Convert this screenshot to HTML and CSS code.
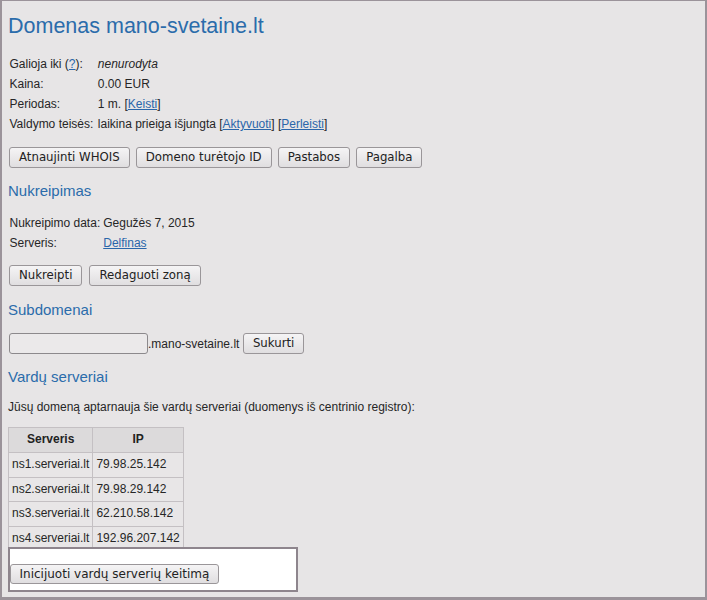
FILE: index.html
```html
<!DOCTYPE html>
<html lang="lt">
<head>
<meta charset="utf-8">
<title>Domenas mano-svetaine.lt</title>
<link rel="stylesheet" href="styles.css">
</head>
<body>
<div class="frame">
  <h1 class="title">Domenas mano-svetaine.lt</h1>

  <table class="info info-top">
    <tr><td>Galioja iki (<a href="#">?</a>):</td><td><em>nenurodyta</em></td></tr>
    <tr><td>Kaina:</td><td>0.00 EUR</td></tr>
    <tr><td>Periodas:</td><td>1 m. [<a href="#">Keisti</a>]</td></tr>
    <tr><td>Valdymo teisės:</td><td>laikina prieiga išjungta [<a href="#">Aktyvuoti</a>] [<a href="#">Perleisti</a>]</td></tr>
  </table>

  <div class="btns btns-1">
    <button class="btn">Atnaujinti WHOIS</button>
    <button class="btn">Domeno turėtojo ID</button>
    <button class="btn">Pastabos</button>
    <button class="btn">Pagalba</button>
  </div>

  <h2 class="section s-redirect">Nukreipimas</h2>

  <table class="info info-redirect">
    <tr><td>Nukreipimo data:</td><td>Gegužės 7, 2015</td></tr>
    <tr><td>Serveris:</td><td><a href="#">Delfinas</a></td></tr>
  </table>

  <div class="btns btns-2">
    <button class="btn">Nukreipti</button>
    <button class="btn">Redaguoti zoną</button>
  </div>

  <h2 class="section s-sub">Subdomenai</h2>

  <div class="sub-row">
    <input class="sub-input" type="text">
    <span class="sub-suffix">.mano-svetaine.lt</span>
    <button class="btn">Sukurti</button>
  </div>

  <h2 class="section s-ns">Vardų serveriai</h2>

  <p class="ns-note">Jūsų domeną aptarnauja šie vardų serveriai (duomenys iš centrinio registro):</p>

  <table class="ns">
    <tr><th>Serveris</th><th>IP</th></tr>
    <tr><td>ns1.serveriai.lt</td><td>79.98.25.142</td></tr>
    <tr><td>ns2.serveriai.lt</td><td>79.98.29.142</td></tr>
    <tr><td>ns3.serveriai.lt</td><td>62.210.58.142</td></tr>
    <tr><td>ns4.serveriai.lt</td><td>192.96.207.142</td></tr>
  </table>

  <div class="highlight">
    <button class="btn btn-wide">Inicijuoti vardų serverių keitimą</button>
  </div>
</div>
</body>
</html>
```

FILE: styles.css
```css
html, body {
  margin: 0;
  padding: 0;
  background: #e7e5e6;
}

.frame {
  box-sizing: border-box;
  width: 707px;
  height: 600px;
  overflow: hidden;
  background: #e7e5e6;
  border-style: solid;
  border-color: #9b939a;
  border-width: 1px 2px 3px 2px;
  padding: 0 6px;
  display: flex;
  flex-direction: column;
  align-items: flex-start;
  font-family: "Liberation Sans", Arial, sans-serif;
  font-size: 12px;
  color: #262626;
}

a {
  color: #2a66aa;
  text-decoration: underline;
}

.title {
  margin: 11.85px 0 0 0;
  font-size: 21.5px;
  line-height: 26px;
  font-weight: normal;
  color: #2b6cab;
}

.section {
  margin: 0;
  font-size: 15px;
  line-height: 18px;
  font-weight: normal;
  color: #2b6cab;
}

.info {
  border-spacing: 0;
  border-collapse: separate;
}

.info td {
  padding: 2px 1.5px;
  line-height: 16px;
  white-space: nowrap;
  vertical-align: top;
}

.info-top td:first-child { padding-right: 3px; }

.info-top { margin-top: 15.4px; }
.btns-1 { margin-top: 12.9px; }
.s-redirect { margin-top: 13.5px; }
.info-redirect { margin-top: 13.3px; }
.btns-2 { margin-top: 12.2px; }
.s-sub { margin-top: 14.8px; }
.sub-row { margin-top: 14.2px; }
.s-ns { margin-top: 13.5px; }

.btns {
  display: flex;
  gap: 6px;
  padding-left: 1px;
}

.btns-2 { gap: 7px; }

.btn {
  box-sizing: border-box;
  height: 21px;
  margin: 0;
  padding: 2px 9px;
  border: 1px solid #9a9699;
  border-radius: 3px;
  background: linear-gradient(#f5f4f5, #e0dee0);
  font-family: "DejaVu Sans", sans-serif;
  font-size: 11.75px;
  line-height: 15px;
  color: #222;
  white-space: nowrap;
}

.btn-wide {
  font-size: 12px;
}

.sub-row {
  display: flex;
  align-items: center;
  padding-left: 1px;
  height: 21px;
}

.sub-input {
  box-sizing: border-box;
  width: 139px;
  height: 20.5px;
  margin: 0;
  padding: 0 3px;
  border: 1px solid #8c898c;
  border-radius: 3px;
  background: #ebe9ea;
}

.sub-suffix {
  margin-right: 3.5px;
  line-height: 16px;
}

.ns-note {
  margin: 13.6px 0 0 0;
  line-height: 16px;
}

.ns {
  margin-top: 12.2px;
  border-collapse: collapse;
}

.ns th,
.ns td {
  border: 1px solid #c4c0c3;
  padding: 5px 3px;
  line-height: 13.6px;
  white-space: nowrap;
  text-align: left;
}

.ns th {
  background: #dcdadb;
  font-weight: bold;
  text-align: center;
  color: #222;
}

.ns td {
  background: #e8e6e7;
}

.highlight {
  position: relative;
  z-index: 1;
  box-sizing: border-box;
  width: 290px;
  margin: -4.5px 0 0 -0.5px;
  padding: 14.7px 0 6px 0;
  border: 2.5px solid #8e858d;
  background: #ffffff;
}

.highlight .btn {
  height: 20.7px;
}
```
